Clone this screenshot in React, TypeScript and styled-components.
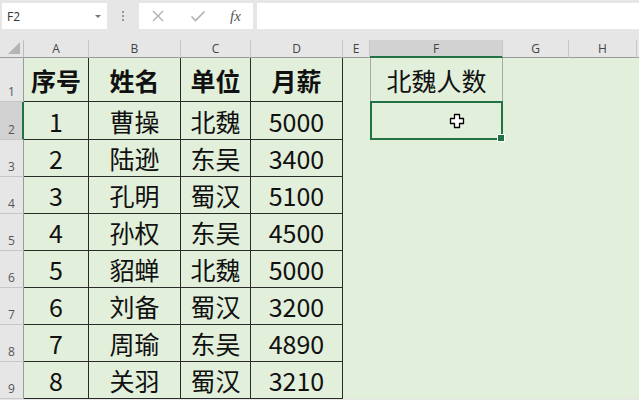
import styled, { createGlobalStyle } from 'styled-components'

const GlobalStyle = createGlobalStyle`
  html, body {
    margin: 0;
    padding: 0;
    background: #e6e6e6;
    overflow: hidden;
  }
`

const COLS = [24, 65, 92, 70, 92, 27, 133, 66, 68, 40]
const ROWS = [18, 44, 38, 37, 37, 37, 37, 37, 37, 37]
const GREEN = '#217346'

const Page = styled.div`
  width: 639px;
  height: 400px;
  display: flex;
  flex-direction: column;
  background: #e6e6e6;
  font-family: "Noto Sans CJK SC", "Noto Sans", sans-serif;
  overflow: hidden;
`

const Toolbar = styled.div`
  height: 32px;
  margin-bottom: 8px;
  display: flex;
  align-items: center;
  padding-left: 2px;
`

const NameBox = styled.div`
  width: 105px;
  height: 26px;
  background: #fff;
  display: flex;
  align-items: center;
  justify-content: space-between;
  padding: 0 6px 0 5px;
  box-sizing: border-box;
  font-family: "Open Sans", "Liberation Sans", sans-serif;
  font-size: 12px;
  color: #333;
`

const Arrow = styled.span`
  width: 0;
  height: 0;
  border-left: 3px solid transparent;
  border-right: 3px solid transparent;
  border-top: 3px solid #777;
`

const Dots = styled.div`
  width: 32px;
  display: flex;
  flex-direction: column;
  align-items: center;
  gap: 2px;
  & > span {
    width: 2px;
    height: 2px;
    background: #999;
  }
`

const FxBox = styled.div`
  width: 114px;
  height: 26px;
  background: #fff;
  display: flex;
  align-items: center;
  justify-content: space-around;
  margin-right: 4px;
`

const Fx = styled.span`
  font-family: "Liberation Serif", serif;
  font-style: italic;
  font-size: 15px;
  color: #555;
`

const Formula = styled.div`
  flex: 1;
  height: 26px;
  background: #fff;
`

const Sheet = styled.div`
  display: grid;
  grid-template-columns: ${COLS.map(c => c + 'px').join(' ')};
  grid-template-rows: ${ROWS.map(r => r + 'px').join(' ')};
  background: #e2efda;
`

const Corner = styled.div`
  background: #e6e6e6;
  border-right: 1px solid #bdbdbd;
  border-bottom: 1px solid #9b9b9b;
  box-sizing: border-box;
  position: relative;
  &::after {
    content: '';
    position: absolute;
    right: 3px;
    bottom: 3px;
    border-left: 12px solid transparent;
    border-bottom: 12px solid #b4b4b4;
  }
`

const ColHead = styled.div<{ $active?: boolean }>`
  background: ${p => (p.$active ? '#d2d2d2' : '#e6e6e6')};
  border-right: 1px solid #c6c6c6;
  border-bottom: ${p => (p.$active ? `2px solid ${GREEN}` : '1px solid #9b9b9b')};
  box-sizing: border-box;
  display: flex;
  align-items: center;
  justify-content: center;
  font-family: "Open Sans", "Liberation Sans", sans-serif;
  font-size: 12px;
  color: #444;
`

const RowHead = styled.div<{ $active?: boolean }>`
  background: ${p => (p.$active ? '#d2d2d2' : '#e6e6e6')};
  border-right: ${p => (p.$active ? `2px solid ${GREEN}` : '1px solid #9b9b9b')};
  border-bottom: 1px solid #c6c6c6;
  box-sizing: border-box;
  display: flex;
  align-items: flex-end;
  padding: 0 0 1px 8px;
  font-family: "Open Sans", "Liberation Sans", sans-serif;
  font-size: 12px;
  color: #555;
`

const Cell = styled.div<{ $bold?: boolean; $table?: boolean }>`
  box-sizing: border-box;
  display: flex;
  align-items: center;
  justify-content: center;
  font-size: 25px;
  font-weight: ${p => (p.$bold ? 700 : 400)};
  color: #111;
  border-right: ${p => (p.$table ? '1px solid #2a2a2a' : 'none')};
  border-bottom: ${p => (p.$table ? '1px solid #2a2a2a' : 'none')};
  white-space: nowrap;
`

const LabelCell = styled(Cell)`
  border: 1px solid #a9a9a9;
  border-top: none;
`

const SelectCell = styled.div`
  box-sizing: border-box;
  border: 2px solid ${GREEN};
  margin-top: -1px;
  position: relative;
  display: flex;
  align-items: center;
  justify-content: center;
  padding-left: 40px;
`

const Handle = styled.span`
  position: absolute;
  right: -4px;
  bottom: -4px;
  width: 6px;
  height: 6px;
  background: ${GREEN};
  border: 1px solid #fff;
`

const letters = ['A', 'B', 'C', 'D', 'E', 'F', 'G', 'H', '']

const data = [
  ['序号', '姓名', '单位', '月薪'],
  ['1', '曹操', '北魏', '5000'],
  ['2', '陆逊', '东吴', '3400'],
  ['3', '孔明', '蜀汉', '5100'],
  ['4', '孙权', '东吴', '4500'],
  ['5', '貂蝉', '北魏', '5000'],
  ['6', '刘备', '蜀汉', '3200'],
  ['7', '周瑜', '东吴', '4890'],
  ['8', '关羽', '蜀汉', '3210'],
]

function CrossCursor() {
  return (
    <svg width="16" height="16" viewBox="0 0 16 16">
      <path
        d="M5.5 1.5h5v4h4v5h-4v4h-5v-4h-4v-5h4z"
        fill="#fff"
        stroke="#000"
        strokeWidth="1.3"
        strokeLinejoin="round"
      />
    </svg>
  )
}

function Row({ index, row }: { index: number; row: string[] }) {
  const n = index + 1
  return (
    <>
      <RowHead $active={n === 2}>{n}</RowHead>
      {row.map((v, c) => (
        <Cell key={c} $table $bold={index === 0}>
          {v}
        </Cell>
      ))}
      <Cell />
      {n === 1 && <LabelCell>北魏人数</LabelCell>}
      {n === 2 && (
        <SelectCell>
          <CrossCursor />
          <Handle />
        </SelectCell>
      )}
      {n > 2 && <Cell />}
      <Cell />
      <Cell />
      <Cell />
    </>
  )
}

export default function App() {
  return (
    <Page>
      <GlobalStyle />
      <Toolbar>
        <NameBox>
          F2
          <Arrow />
        </NameBox>
        <Dots>
          <span />
          <span />
          <span />
        </Dots>
        <FxBox>
          <svg width="14" height="14" viewBox="0 0 14 14">
            <path d="M2 2l10 10M12 2L2 12" stroke="#b0b0b0" strokeWidth="1.4" fill="none" />
          </svg>
          <svg width="16" height="14" viewBox="0 0 16 14">
            <path d="M1.5 7.5l4 4L14.5 2.5" stroke="#b0b0b0" strokeWidth="1.6" fill="none" />
          </svg>
          <Fx>fx</Fx>
        </FxBox>
        <Formula />
      </Toolbar>
      <Sheet>
        <Corner />
        {letters.map((l, i) => (
          <ColHead key={i} $active={l === 'F'}>
            {l}
          </ColHead>
        ))}
        {data.map((row, r) => (
          <Row key={r} index={r} row={row} />
        ))}
      </Sheet>
    </Page>
  )
}
